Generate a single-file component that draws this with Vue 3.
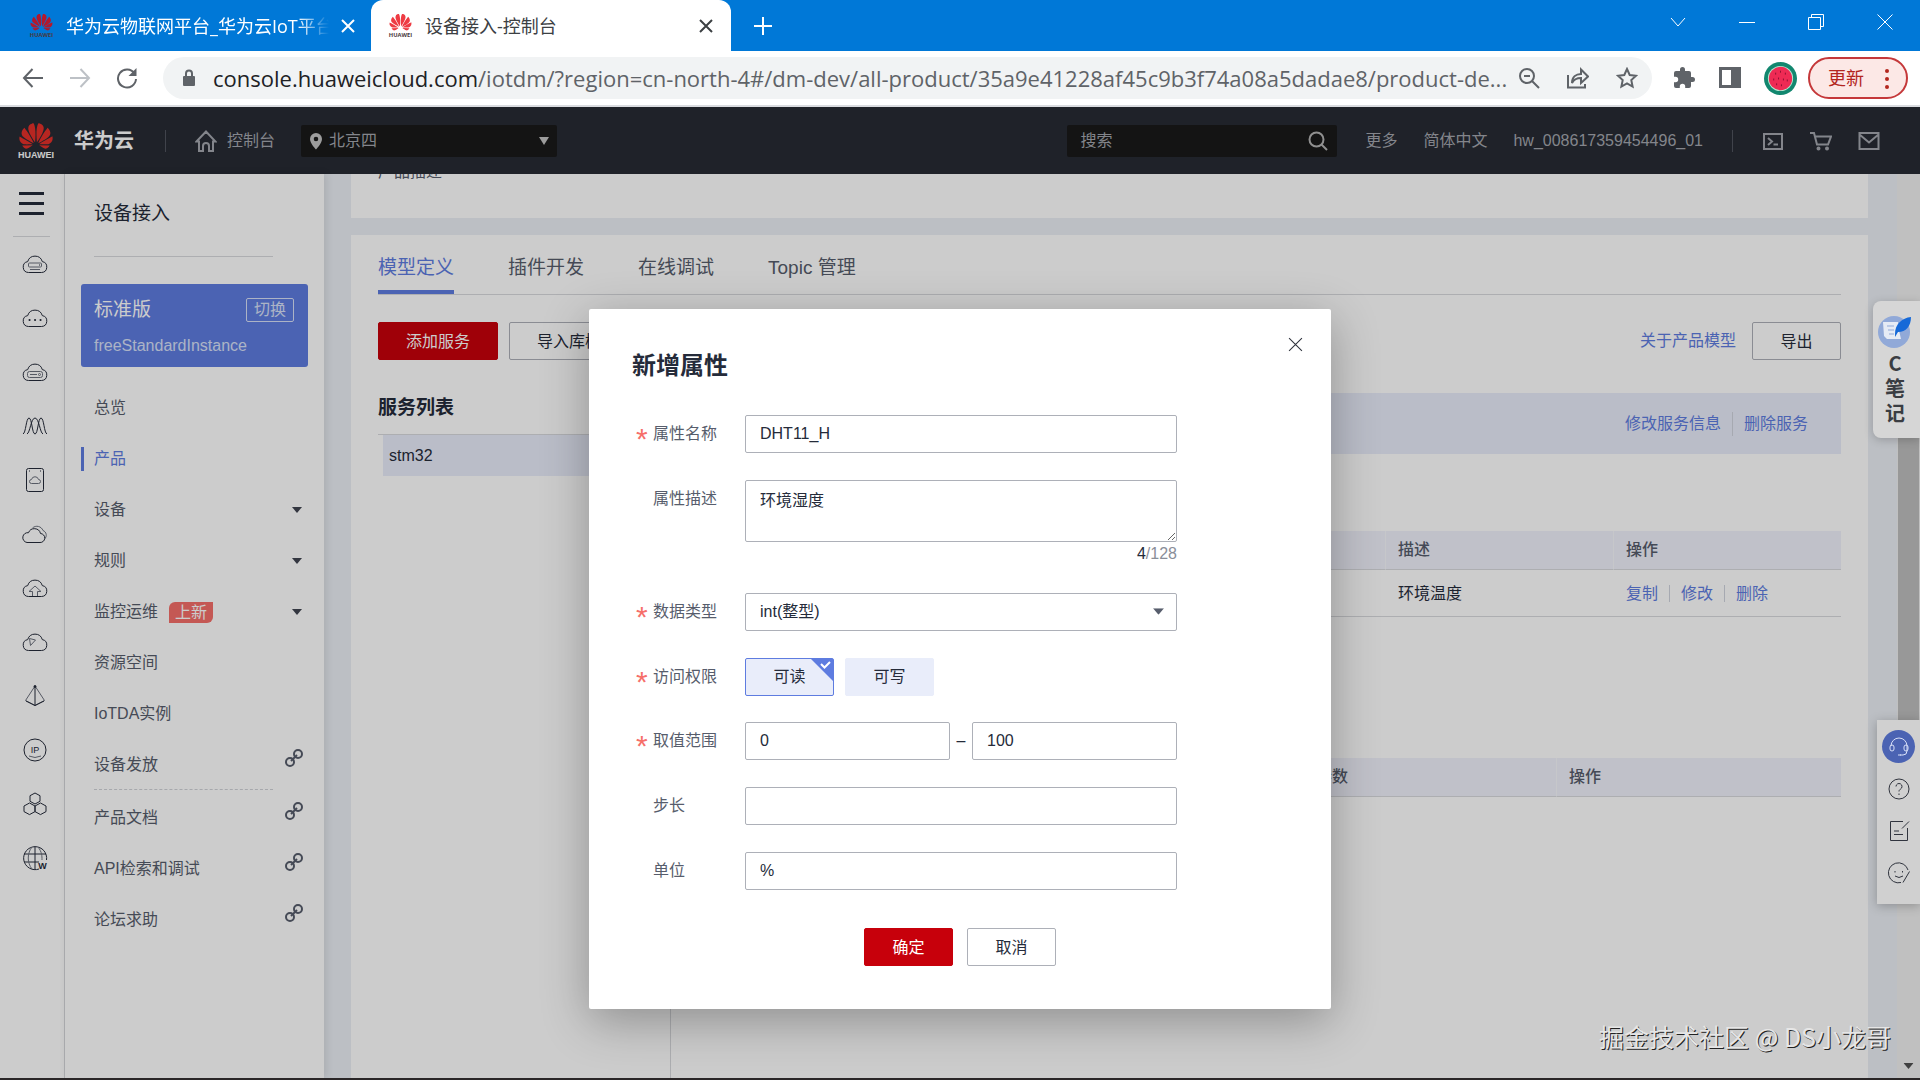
<template>
  <div class="browser">
    <!-- Shared icon symbols -->
    <svg class="sprite" aria-hidden="true">
      <symbol id="petals" viewBox="0 2 24 20">
        <path d="M3.67 6.14S1.82 7.91 1.72 9.78v.35c.08 1.51 1.22 2.4 1.22 2.4 1.83 1.79 6.26 4.04 7.3 4.55 0 0 .06.03.1-.01l.02-.04v-.04C7.52 10.8 3.67 6.14 3.67 6.14zM9.65 18.6c-.02-.08-.1-.08-.1-.08l-7.38.26c.8 1.43 2.15 2.53 3.56 2.2.96-.25 3.16-1.78 3.88-2.3.06-.05.04-.08.04-.08zm.08-.78C6.49 15.63.21 12.28.21 12.28c-.15.46-.2.9-.21 1.3v.07c0 1.07.4 1.82.4 1.82.8 1.69 2.34 2.2 2.34 2.2.7.3 1.4.31 1.4.31.12.02 4.4 0 5.54 0 .05 0 .08-.05.08-.05v-.06c0-.03-.03-.05-.03-.05zM9.06 3.19a3.42 3.42 0 0 0-2.57 3.15v.41c.03.6.16 1.05.16 1.05.66 2.9 3.86 7.65 4.55 8.65.05.05.1.03.1.03a.1.1 0 0 0 .06-.1c1.06-10.6-1.11-13.42-1.11-13.42-.32.02-1.19.23-1.19.23zm8.3 2.27s-.49-1.8-2.44-2.28c0 0-.57-.14-1.17-.22 0 0-2.18 2.81-1.12 13.43.01.07.06.08.06.08.07.03.1-.03.1-.03.72-1.03 3.9-5.76 4.55-8.64 0 0 .36-1.4.02-2.34zm-2.92 13.07s-.07 0-.09.05c0 0-.01.07.03.1.7.51 2.85 2 3.88 2.3 0 0 .16.05.43.06h.14c.69-.02 1.9-.37 3-2.26l-7.4-.25zm7.83-8.41c.14-2.06-1.94-3.97-1.94-3.98 0 0-3.85 4.66-6.67 10.8 0 0-.03.08.02.13l.04.01h.06c1.06-.53 5.46-2.77 7.28-4.54 0 0 1.15-.93 1.21-2.42zm1.52 2.14s-6.28 3.37-9.52 5.55c0 0-.05.04-.03.11 0 0 .03.06.07.06 1.16 0 5.56 0 5.67-.02 0 0 .57-.02 1.27-.29 0 0 1.56-.5 2.37-2.27 0 0 .73-1.45.17-3.14z" />
      </symbol>
      <symbol id="cloud" viewBox="0 0 26 26">
        <path d="M6.5 21.5h13a5.5 5.5 0 0 0 .8-10.9A7.6 7.6 0 0 0 5.7 10.6a5.5 5.5 0 0 0 .8 10.9z" />
      </symbol>
      <symbol id="chain" viewBox="0 0 18 18">
        <circle cx="5" cy="13" r="4" />
        <circle cx="13" cy="5" r="4" />
        <path d="M6 12l6-6" />
      </symbol>
      <symbol id="cross" viewBox="0 0 14 14">
        <path d="M1 1l12 12M13 1L1 13" />
      </symbol>
      <symbol id="caret" viewBox="0 0 10 6">
        <path d="M0 0h10L5 6z" />
      </symbol>
    </svg>

    <!-- Browser tabs -->
    <div class="tab-strip">
      <div class="tab tab-idle">
        <svg class="favicon dark" viewBox="0 0 26 26">
          <use href="#petals" x="1" y="0" width="24" height="19" />
          <text x="13" y="25" text-anchor="middle">HUAWEI</text>
        </svg>
        <span class="tab-title faded">华为云物联网平台_华为云IoT平台</span>
        <button class="tab-close" aria-label="关闭"><svg class="line" viewBox="0 0 14 14"><use href="#cross" /></svg></button>
      </div>
      <div class="tab tab-active">
        <svg class="favicon" viewBox="0 0 26 26">
          <use href="#petals" x="1" y="0" width="24" height="19" />
          <text x="13" y="25" text-anchor="middle">HUAWEI</text>
        </svg>
        <span class="tab-title">设备接入-控制台</span>
        <button class="tab-close" aria-label="关闭"><svg class="line" viewBox="0 0 14 14"><use href="#cross" /></svg></button>
      </div>
      <button class="new-tab" aria-label="新标签页">
        <svg class="line" viewBox="0 0 18 18"><path d="M9 0v18M0 9h18" /></svg>
      </button>
      <div class="window-controls">
        <button aria-label="搜索标签页"><svg viewBox="0 0 16 16"><path d="M1 4l7 8 7-8" /></svg></button>
        <button aria-label="最小化"><svg viewBox="0 0 16 16"><path d="M0 8.5h16" /></svg></button>
        <button aria-label="还原"><svg viewBox="0 0 16 16"><path d="M.5 3.5h12v12H.5zM3.5 3.5v-3h12v12h-3" /></svg></button>
        <button aria-label="关闭窗口"><svg viewBox="0 0 16 16"><path d="M.5.5l15 15M15.5.5l-15 15" /></svg></button>
      </div>
    </div>

    <!-- Address bar -->
    <div class="toolbar">
      <button class="nav-button" aria-label="后退"><svg viewBox="0 0 22 22"><path d="M21 11H2M10.5 2L2 11l8.5 9" /></svg></button>
      <button class="nav-button disabled" aria-label="前进"><svg viewBox="0 0 22 22"><path d="M1 11h19M11.5 2l8.5 9-8.5 9" /></svg></button>
      <button class="nav-button" aria-label="重新加载">
        <svg viewBox="0 0 22 22"><path d="M18.5 6.5A9 9 0 1 0 20 12" /><path class="solid" d="M20.5 1v8h-8z" /></svg>
      </button>
      <div class="omnibox">
        <svg class="lock" viewBox="0 0 14 18">
          <rect x="1" y="7" width="12" height="10" rx="1" />
          <path d="M4 8V4.5a3 3 0 0 1 6 0V8" />
        </svg>
        <span class="url">console.huaweicloud.com<span class="url-path">/iotdm/?region=cn-north-4#/dm-dev/all-product/35a9e41228af45c9b3f74a08a5dadae8/product-de...</span></span>
        <button aria-label="缩放"><svg viewBox="0 0 22 22"><circle cx="9" cy="9" r="7" /><path d="M14 14l7 7M6 9h6" /></svg></button>
        <button aria-label="分享"><svg viewBox="0 0 22 22"><path d="M1 8v12.500h17V17M5 16c0-6 4-9 9-9V2.500l7 7-7 6.500v-5c-4 0-7 1-9 5z" /></svg></button>
        <button aria-label="收藏"><svg viewBox="0 0 22 22"><path d="M11 2l2.700 6 6.300.7-4.700 4.400 1.300 6.400L11 16.300l-5.600 3.200 1.300-6.400L2 8.700 8.300 8z" /></svg></button>
      </div>
      <button class="tool-button" aria-label="扩展程序">
        <svg viewBox="0 0 24 24"><path class="solid" d="M20.500 11H19V7a2 2 0 0 0-2-2h-4V3.500a2.500 2.500 0 0 0-5 0V5H4a2 2 0 0 0-2 2v3.800h1.500a2.700 2.700 0 0 1 0 5.400H2V20a2 2 0 0 0 2 2h3.800v-1.500a2.700 2.700 0 0 1 5.400 0V22H17a2 2 0 0 0 2-2v-4h1.500a2.500 2.500 0 0 0 0-5z" /></svg>
      </button>
      <button class="tool-button" aria-label="侧边栏">
        <svg viewBox="0 0 24 24"><path class="solid" fill-rule="evenodd" d="M1 1h22v21H1zM4 4v15h9V4z" /></svg>
      </button>
      <svg class="avatar" viewBox="0 0 34 34">
        <circle cx="17" cy="17" r="17" fill="#12876f" />
        <circle cx="17" cy="17" r="13" fill="#b5e8d0" />
        <circle cx="17" cy="17" r="12" fill="#ee2a54" />
        <path d="M12 11v2M17 9v2M22 11v2M10 17v2M15 16v2M20 17v2M24 18v2M13 22v2M18 23v2" stroke="#8c1233" stroke-width="1" />
      </svg>
      <button class="update-button">
        更新
        <svg viewBox="0 0 6 22"><circle cx="3" cy="3" r="2" /><circle cx="3" cy="11" r="2" /><circle cx="3" cy="19" r="2" /></svg>
      </button>
    </div>

    <div class="page">
      <!-- Console header -->
      <header class="top-nav">
        <a class="brand" href="#">
          <span class="brand-mark">
            <svg viewBox="0 0 24 20"><use href="#petals" width="24" height="20" /></svg>
            <span>HUAWEI</span>
          </span>
          <strong>华为云</strong>
        </a>
        <span class="nav-divider"></span>
        <a class="console-link" href="#">
          <svg viewBox="0 0 22 22"><path d="M1.500 11.500L11 1.500l9.500 10H18V21h-4v-5a3 3 0 0 0-6 0v5H4v-9.500z" /></svg>
          控制台
        </a>
        <div class="region">
          <svg class="pin" viewBox="0 0 14 18"><path fill-rule="evenodd" d="M7 1a6 6 0 0 0-6 6c0 4.500 6 10.500 6 10.500S13 11.500 13 7a6 6 0 0 0-6-6zm0 3.700a2.300 2.300 0 1 1 0 4.600 2.300 2.300 0 0 1 0-4.600z" /></svg>
          <select aria-label="区域"><option>北京四</option></select>
          <svg class="region-caret" viewBox="0 0 10 8"><path d="M0 0h10L5 8z" /></svg>
        </div>
        <div class="search">
          <input type="text" placeholder="搜索" aria-label="搜索">
          <svg viewBox="0 0 20 20"><circle cx="8.500" cy="8.500" r="7" /><path d="M13.500 13.500L19 19" /></svg>
        </div>
        <a href="#">更多</a>
        <a href="#">简体中文</a>
        <a href="#">hw_008617359454496_01</a>
        <span class="nav-divider"></span>
        <a class="nav-icon" href="#" aria-label="命令行">
          <svg viewBox="0 0 22 22"><path d="M2 4h18v15H2zM6 8l4 3.500L6 15M11.500 14.500H16" /></svg>
        </a>
        <a class="nav-icon" href="#" aria-label="购物车">
          <svg viewBox="0 0 22 22"><path d="M0 3h4l3 11.500h11L21 6.500H5.500" /><circle cx="8.500" cy="18.500" r="1" /><circle cx="17" cy="18.500" r="1" /></svg>
        </a>
        <a class="nav-icon" href="#" aria-label="消息">
          <svg viewBox="0 0 22 22"><path d="M1.500 3h19v16h-19zM1.500 4.500l9.500 8 9.500-8" /></svg>
        </a>
      </header>

      <div class="workspace">
        <!-- Icon rail -->
        <nav class="rail" aria-label="服务">
          <button class="hamburger" aria-label="菜单"><span></span><span></span><span></span></button>
          <ul>
            <li v-for="name in railIcons" :key="name">
              <svg viewBox="0 0 26 26">
                <use v-if="name.startsWith('cloud')" href="#cloud" />
                <template v-if="name === 'cloud-server'"><rect class="thin" x="6.500" y="12" width="13" height="4" rx="1" /><path class="thin" d="M8 18.500h10" /><path d="M17 14h1" /></template>
                <path v-else-if="name === 'cloud-dots'" class="dots" d="M7.500 15h.1M13 15h.1M18.500 15h.1" />
                <template v-else-if="name === 'cloud-disk'"><rect class="thin" x="5.500" y="12.500" width="15" height="6" rx="2" /><path class="thin" d="M8 15.500h7" /><circle class="thin" cx="17.500" cy="15.500" r="1" /></template>
                <path v-else-if="name === 'wave'" d="M1 21C4 20 4 5 7 5s3 16 6 16 3-16 6-16 3 15 6 16M5 21C8 20 9 5 13 5s5 15 8 16" />
                <template v-else-if="name === 'phone'"><rect x="4.500" y="1.500" width="17" height="23" rx="2" /><path class="thin" d="M9.500 16.500h7a2 2 0 0 0 0-4 3.600 3.600 0 0 0-7 0 2 2 0 0 0 0 4z" /><path d="M7 4h1M18 4h1" /></template>
                <template v-else-if="name === 'double'"><path d="M5 21.500h13a4.500 4.500 0 0 0 .5-9 6.300 6.300 0 0 0-12-.8A4.900 4.900 0 0 0 5 21.500z" /><path class="thin" d="M10.500 7a6.500 6.500 0 0 1 10.500 2.500 5 5 0 0 1 1.500 8.500" /></template>
                <path v-else-if="name === 'cloud-up'" class="thin" d="M10.500 21v-4.500H7L13 11l6 5.500h-3.500V21" />
                <path v-else-if="name === 'cloud-mark'" class="thin" d="M7.500 9.500l6 1.500-5 5.500z" />
                <template v-else-if="name === 'prism'"><path class="thin" d="M13 3L3.500 17.500 13 22.500l9.500-5z" /><path d="M13 3v19.500M4 18l9 4.500 9-4.500" /><circle class="filled" cx="13" cy="3.500" r="1" /></template>
                <template v-else-if="name === 'ip'"><circle cx="13" cy="13" r="11" /><text x="13" y="16" text-anchor="middle">IP</text><path class="thin" d="M7 19q6 3 12 0" /></template>
                <path v-else-if="name === 'hexes'" d="M13 2l5 2.700v5.600l-5 2.700-5-2.700V4.700zM7.500 12l5.500 3v5.600l-5.500 3-5.500-3V15zM18.500 12l5.500 3v5.600l-5.500 3-5.500-3V15z" />
                <template v-else-if="name === 'globe'"><path d="M17 24A11.500 11.500 0 1 1 24.500 15M13 1.500v23M2 9h22M2 17h15" /><path class="thin" d="M10 2C5 8 5 18 10 24M16 2c4 5 4 9 4 13" /><text x="20.500" y="24" text-anchor="middle" class="bold">W</text></template>
              </svg>
            </li>
          </ul>
        </nav>

        <!-- Product menu -->
        <aside class="sidebar">
          <h2>设备接入</h2>
          <div class="instance">
            <div class="instance-row">
              <strong>标准版</strong>
              <button>切换</button>
            </div>
            <span>freeStandardInstance</span>
          </div>
          <ul class="menu">
            <li v-for="item in menu" :key="item.text" :class="{ current: item.current, divided: item.divided }">
              <a href="#">{{ item.text }}<em v-if="item.badge">{{ item.badge }}</em></a>
              <svg v-if="item.icon === 'caret'" class="menu-caret" viewBox="0 0 10 6"><use href="#caret" /></svg>
              <svg v-if="item.icon === 'chain'" class="menu-chain" viewBox="0 0 18 18"><use href="#chain" /></svg>
            </li>
          </ul>
        </aside>

        <!-- Product detail -->
        <main class="content">
          <section class="card summary">产品描述</section>
          <section class="card detail">
            <nav class="detail-tabs">
              <a v-for="(tab, i) in detailTabs" :key="tab" href="#" :class="{ active: i === 0 }">{{ tab }}</a>
            </nav>
            <div class="actions">
              <button class="btn primary wide">添加服务</button>
              <button class="btn wide">导入库模型</button>
              <a class="model-link" href="#">关于产品模型</a>
              <button class="btn">导出</button>
            </div>
            <div class="service-area">
              <div class="services">
                <h3>服务列表</h3>
                <ul><li>stm32</li></ul>
              </div>
              <div class="service-detail">
                <div class="service-bar">
                  <a href="#">修改服务信息</a>
                  <a href="#">删除服务</a>
                </div>
                <table class="properties">
                  <thead>
                    <tr><th></th><th></th><th></th><th>描述</th><th>操作</th></tr>
                  </thead>
                  <tbody>
                    <tr>
                      <td></td><td></td><td></td>
                      <td>环境温度</td>
                      <td class="row-actions"><a href="#">复制</a><a href="#">修改</a><a href="#">删除</a></td>
                    </tr>
                  </tbody>
                </table>
                <table class="commands">
                  <thead>
                    <tr><th></th><th></th><th>下发参数</th><th>操作</th></tr>
                  </thead>
                </table>
              </div>
            </div>
          </section>
        </main>

        <div class="scroll-track">
          <div class="scroll-thumb"></div>
          <svg viewBox="0 0 10 6"><use href="#caret" /></svg>
        </div>
      </div>

      <!-- Modal -->
      <div class="overlay">
        <form class="dialog" role="dialog" aria-labelledby="dialog-title" @submit.prevent>
          <button type="button" class="dialog-close" aria-label="关闭"><svg viewBox="0 0 14 14"><use href="#cross" /></svg></button>
          <h1 id="dialog-title">新增属性</h1>
          <div class="field">
            <label class="required" for="name">属性名称</label>
            <input id="name" v-model="form.name" type="text">
          </div>
          <div class="field">
            <label for="description">属性描述</label>
            <div class="control">
              <textarea id="description" v-model="form.description" maxlength="128"></textarea>
              <p class="counter"><b>{{ form.description.length }}</b>/128</p>
            </div>
          </div>
          <div class="field">
            <label class="required" for="type">数据类型</label>
            <div class="control select-box">
              <select id="type" v-model="form.type"><option>int(整型)</option></select>
              <svg viewBox="0 0 10 6"><use href="#caret" /></svg>
            </div>
          </div>
          <fieldset class="field">
            <legend class="required">访问权限</legend>
            <label class="tile">
              <input v-model="form.readable" type="checkbox">
              可读
              <svg viewBox="0 0 22 22"><path class="corner" d="M0 0h22v22z" /><path class="tick" d="M10 5l3.500 3.500L19 3" /></svg>
            </label>
            <label class="tile">
              <input v-model="form.writable" type="checkbox">
              可写
              <svg viewBox="0 0 22 22"><path class="corner" d="M0 0h22v22z" /><path class="tick" d="M10 5l3.500 3.500L19 3" /></svg>
            </label>
          </fieldset>
          <div class="field">
            <label class="required" for="min">取值范围</label>
            <div class="control range">
              <input id="min" v-model="form.min" type="text">
              <span>–</span>
              <input v-model="form.max" type="text" aria-label="最大值">
            </div>
          </div>
          <div class="field">
            <label for="step">步长</label>
            <input id="step" v-model="form.step" type="text">
          </div>
          <div class="field">
            <label for="unit">单位</label>
            <input id="unit" v-model="form.unit" type="text">
          </div>
          <div class="dialog-actions">
            <button type="submit" class="btn primary">确定</button>
            <button type="button" class="btn">取消</button>
          </div>
        </form>
      </div>

      <!-- Floating widgets -->
      <button class="note-widget">
        <svg viewBox="0 0 34 34">
          <circle cx="16" cy="18" r="16" fill="#91a9d8" />
          <path d="M5 8h15v4l3 13H9L6 22z" fill="#e6ebf5" />
          <path d="M9 12h7M10 16h6M11 20h5" stroke="#91a9d8" stroke-width="1" />
          <path d="M17 20C17 10 24 4 33 3c0 9-5 15-13 15l-3 5z" fill="#1669d8" />
        </svg>
        <span>C笔记</span>
      </button>
      <div class="help-widget">
        <button class="round" aria-label="客服"><svg viewBox="0 0 22 22"><path d="M3 10a8 8 0 0 1 16 0v5a4 4 0 0 1-4 4h-3" /><rect x="2" y="9" width="4" height="6" rx="2" /><rect x="16" y="9" width="4" height="6" rx="2" /><path d="M10 19h3" /></svg></button>
        <button aria-label="帮助"><svg viewBox="0 0 22 22"><circle cx="11" cy="11" r="10" /><path d="M8 8.500a3 3 0 1 1 4.500 2.600c-1 .7-1.500 1.200-1.500 2.400M11 15.500V17" /></svg></button>
        <button aria-label="反馈"><svg viewBox="0 0 22 22"><path d="M15 1.500H2.500v19h17V8M21 1.500l-7 7M6 11h5M6 14.500h9" /></svg></button>
        <button aria-label="评价"><svg viewBox="0 0 22 22"><path d="M20 8A10 10 0 1 0 13 20.500M21.500 9.500L15 20.500M7 14q4 3 8 0M7 9v1.500M14.500 9v1.500" /></svg></button>
      </div>
      <p class="watermark">掘金技术社区 @ DS小龙哥</p>
    </div>
  </div>
</template>

<script setup>
import { reactive } from 'vue'

const railIcons = [
  'cloud-server', 'cloud-dots', 'cloud-disk', 'wave', 'phone', 'double',
  'cloud-up', 'cloud-mark', 'prism', 'ip', 'hexes', 'globe'
]

const menu = [
  { text: '总览' },
  { text: '产品', current: true },
  { text: '设备', icon: 'caret' },
  { text: '规则', icon: 'caret' },
  { text: '监控运维', badge: '上新', icon: 'caret' },
  { text: '资源空间' },
  { text: 'IoTDA实例' },
  { text: '设备发放', icon: 'chain', divided: true },
  { text: '产品文档', icon: 'chain' },
  { text: 'API检索和调试', icon: 'chain' },
  { text: '论坛求助', icon: 'chain' }
]

const detailTabs = ['模型定义', '插件开发', '在线调试', 'Topic 管理']

const form = reactive({
  name: 'DHT11_H',
  description: '环境湿度',
  type: 'int(整型)',
  readable: true,
  writable: false,
  min: '0',
  max: '100',
  step: '',
  unit: '%'
})
</script>

<style>
body {
  margin: 0;
  overflow: hidden;
}
</style>

<style scoped>
* {
  box-sizing: border-box;
}

.browser {
  display: flex;
  flex-direction: column;
  height: 100vh;
  font-family: "Liberation Sans", "Noto Sans CJK SC", sans-serif;
  font-size: 16px;
  line-height: 24px;
  color: #252b3a;
  background: #fff;
}

button, input, select, textarea {
  font: inherit;
  color: inherit;
}

button {
  padding: 0;
  border: 0;
  background: none;
}

a {
  color: inherit;
  text-decoration: none;
}

ul, h1, h2, h3, p {
  margin: 0;
  padding: 0;
  list-style: none;
}

svg {
  display: block;
  flex: none;
}

.sprite {
  position: absolute;
  width: 0;
  height: 0;
}

/* Browser frame */
.tab-strip {
  display: flex;
  flex: none;
  height: 51px;
  color: #fff;
  background: #0078d7;
}

.tab {
  display: flex;
  align-items: center;
  gap: 12px;
  font-family: "Open Sans", "Noto Sans CJK SC", sans-serif;
  font-size: 18px;
}

.tab-idle {
  width: 371px;
  padding: 0 16px 0 29px;
}

.tab-active {
  width: 360px;
  padding: 0 18px 0 17px;
  border-radius: 12px 12px 0 0;
  color: #3c4043;
  background: #fff;
}

.tab-title {
  flex: 1;
  overflow: hidden;
  white-space: nowrap;
}

.faded {
  mask-image: linear-gradient(90deg, #000 88%, transparent);
}

.favicon {
  width: 25px;
  height: 25px;
  fill: #ee3b43;
}

.favicon.dark {
  fill: #b3182c;
}

.favicon text {
  font-size: 6px;
  font-weight: bold;
  fill: #4a3a40;
}

.tab-close svg {
  width: 14px;
  height: 14px;
}

.line {
  fill: none;
  stroke: currentColor;
  stroke-width: 2;
}

.new-tab {
  padding: 0 23px;
}

.new-tab svg {
  width: 18px;
  height: 18px;
}

.window-controls {
  display: flex;
  gap: 53px;
  height: 43px;
  margin-left: auto;
  padding-right: 27px;
}

.window-controls svg {
  width: 16px;
  height: 16px;
  fill: none;
  stroke: #fff;
  stroke-width: 1;
}

.toolbar {
  display: flex;
  flex: none;
  align-items: center;
  height: 56px;
  padding: 0 12px 0 22px;
  border-bottom: 2px solid #dadce0;
  color: #5f6368;
}

.nav-button {
  width: 47px;
}

.nav-button svg {
  width: 22px;
  height: 22px;
}

.nav-button svg, .omnibox button svg {
  fill: none;
  stroke: currentColor;
  stroke-width: 2;
}

.nav-button.disabled {
  color: #bdc1c6;
}

svg .solid {
  fill: #5f6368;
  stroke: none;
}

.omnibox {
  display: flex;
  flex: 1;
  align-items: center;
  min-width: 0;
  height: 42px;
  margin-right: 20px;
  padding: 0 14px 0 19px;
  border-radius: 21px;
  background: #f1f3f4;
}

.lock {
  width: 14px;
  height: 18px;
  margin-right: 17px;
  fill: #5f6368;
}

.lock path {
  fill: none;
  stroke: #5f6368;
  stroke-width: 2;
}

.url {
  flex: 1;
  overflow: hidden;
  font-family: "Open Sans", sans-serif;
  font-size: 22px;
  line-height: 32px;
  color: #202124;
  white-space: nowrap;
}

.url-path {
  color: #5f6368;
}

.omnibox button svg {
  width: 22px;
  height: 22px;
}

.omnibox button + button {
  margin-left: 27px;
}

.tool-button {
  margin-right: 22px;
}

.tool-button svg {
  width: 24px;
  height: 24px;
}

.avatar {
  width: 33px;
  height: 33px;
  margin-right: 11px;
}

.update-button {
  display: flex;
  align-items: center;
  justify-content: space-between;
  width: 100px;
  height: 42px;
  padding: 2px 16px 0 18px;
  border: 2px solid #c5383a;
  border-radius: 21px;
  font-size: 18px;
  color: #b3261e;
  background: #fce8e6;
}

.update-button svg {
  width: 6px;
  height: 22px;
  fill: currentColor;
}

/* Console header */
.page {
  position: relative;
  display: flex;
  flex: 1;
  flex-direction: column;
  min-height: 0;
  overflow: hidden;
  border-bottom: 2px solid #2a2627;
}

.top-nav {
  display: flex;
  flex: none;
  align-items: center;
  gap: 26px;
  height: 67px;
  padding: 0 40px 0 18px;
  color: #a4a7ae;
  background: #272b34;
}

.brand {
  display: flex;
  align-items: center;
  gap: 20px;
  margin-right: 2px;
}

.brand strong {
  font-size: 20px;
  color: #fff;
}

.brand-mark {
  display: flex;
  flex-direction: column;
  align-items: center;
  width: 36px;
  font-size: 9px;
  font-weight: bold;
  line-height: 10px;
  color: #fff;
}

.brand-mark svg {
  width: 34px;
  height: 28px;
  fill: #e5302a;
}

.nav-divider {
  width: 1px;
  height: 22px;
  margin: 0 3px;
  background: #50545e;
}

.console-link {
  display: flex;
  align-items: center;
  gap: 10px;
}

.console-link svg, .nav-icon svg {
  width: 22px;
  height: 22px;
  fill: none;
  stroke: currentColor;
  stroke-width: 2;
}

.region, .search {
  position: relative;
  display: flex;
  align-items: center;
  height: 32px;
  border-radius: 2px;
  background: #191919;
}

.region {
  width: 256px;
}

.region select {
  width: 100%;
  height: 32px;
  padding: 1px 28px 0;
  border: 0;
  appearance: none;
  background: none;
}

.pin {
  position: absolute;
  left: 8px;
  width: 14px;
  height: 18px;
  fill: #c4c4c4;
}

.region-caret {
  position: absolute;
  right: 8px;
  width: 10px;
  height: 8px;
  fill: #c4c4c4;
}

.search {
  width: 270px;
  margin-right: 2px;
  margin-left: auto;
  padding: 0 9px 0 13px;
}

.search input {
  flex: 1;
  min-width: 0;
  padding: 0;
  border: 0;
  background: none;
}

.search input::placeholder {
  color: #a4a7ae;
}

.search svg {
  width: 20px;
  height: 20px;
  fill: none;
  stroke: #b4b4b4;
  stroke-width: 2;
}

/* Left navigation */
.workspace {
  display: flex;
  flex: 1;
  min-height: 0;
  background: #ebeff5;
}

.rail {
  flex: none;
  width: 65px;
  border-right: 1px solid #d9dade;
  background: #fff;
}

.hamburger {
  display: flex;
  flex-direction: column;
  gap: 7px;
  width: 37px;
  margin-left: 13px;
  padding: 18px 6px 21px;
  border-bottom: 1px solid #d9dade;
}

.hamburger span {
  height: 3px;
  background: #252b3a;
}

.rail ul {
  padding-left: 6px;
}

.rail li {
  display: flex;
  align-items: center;
  justify-content: center;
  height: 54px;
}

.rail svg {
  width: 26px;
  height: 26px;
  fill: none;
  stroke: #252b3a;
  stroke-width: 1;
}

.rail text {
  font-size: 9px;
  fill: #252b3a;
  stroke: none;
}

.rail .bold {
  font-weight: bold;
}

.rail .filled {
  fill: #252b3a;
}

.rail .thin {
  stroke: #6c717d;
}

.rail .dots {
  stroke-width: 2;
  stroke-linecap: round;
}

.sidebar {
  position: relative;
  flex: none;
  width: 259px;
  padding: 0 16px;
  background: #fff;
  box-shadow: 2px 0 8px rgba(0, 0, 0, 0.1);
}

.sidebar h2 {
  margin: 0 35px 27px 13px;
  padding: 26px 0 28px;
  border-bottom: 1px solid #d9dade;
  font-size: 19px;
  font-weight: normal;
  line-height: 28px;
}

.instance {
  height: 83px;
  margin-bottom: 15px;
  padding: 12px 14px 12px 13px;
  border-radius: 3px;
  line-height: 22px;
  color: #d8e0f8;
  background: #5e7ce0;
}

.instance-row {
  display: flex;
  align-items: center;
  justify-content: space-between;
  margin-bottom: 11px;
}

.instance strong {
  font-size: 19px;
  font-weight: normal;
  line-height: 28px;
  color: #fff;
}

.instance button {
  width: 48px;
  height: 24px;
  border: 1px solid #d8e0f8;
  border-radius: 2px;
}

.menu li {
  display: flex;
  align-items: center;
  justify-content: space-between;
  height: 51px;
  padding: 1px 5px 0 13px;
  color: #575d6c;
}

.menu a {
  display: flex;
  align-items: center;
  gap: 11px;
}

.menu em {
  padding: 0 6px;
  border-radius: 6px 0;
  font-style: normal;
  line-height: 21px;
  color: #fff;
  background: #f66f6a;
}

.menu .current {
  color: #5e7ce0;
  background: linear-gradient(#5e7ce0, #5e7ce0) 0 50% / 3px 24px no-repeat;
}

.menu .divided {
  position: relative;
  margin-bottom: 2px;
}

.menu .divided::after {
  position: absolute;
  right: 35px;
  bottom: 0;
  left: 13px;
  border-bottom: 1px dashed #d0d2d8;
  content: "";
}

.menu-caret {
  width: 10px;
  height: 6px;
  margin-right: 1px;
  fill: #404450;
}

.menu-chain {
  width: 18px;
  height: 18px;
  margin-bottom: 14px;
  fill: none;
  stroke: #575d6c;
  stroke-width: 2;
}

/* Product detail */
.content {
  display: flex;
  flex: 1;
  flex-direction: column;
  gap: 17px;
  min-width: 0;
  padding: 0 29px 0 27px;
  overflow: hidden;
}

.card {
  padding: 0 27px;
  background: #fff;
}

.summary {
  flex: none;
  height: 58px;
  margin-top: -14px;
  color: #575d6c;
}

.detail {
  display: flex;
  flex: 1;
  flex-direction: column;
}

.detail-tabs {
  display: flex;
  gap: 54px;
  height: 60px;
  border-bottom: 1px solid #d9dade;
  font-size: 19px;
  line-height: 28px;
  color: #575d6c;
}

.detail-tabs a {
  padding-top: 19px;
}

.detail-tabs .active {
  border-bottom: 4px solid #5e7ce0;
  color: #5e7ce0;
}

.actions {
  display: flex;
  align-items: center;
  gap: 11px;
  padding: 27px 0;
}

.btn {
  min-width: 89px;
  height: 38px;
  padding-top: 2px;
  border: 1px solid #adb0b8;
  border-radius: 2px;
  background: #fff;
}

.wide {
  padding: 2px 27px 0;
}

.primary {
  border-color: #c7000b;
  color: #fff;
  background: #c7000b;
}

.model-link {
  margin-right: 5px;
  margin-left: auto;
  color: #5e7ce0;
}

.service-area {
  display: flex;
  flex: 1;
}

.services {
  width: 293px;
  border-right: 1px solid #d9dade;
}

.services h3 {
  padding: 7px 0 12px;
  border-bottom: 1px solid #d9dade;
  font-size: 19px;
  line-height: 28px;
}

.services li {
  margin-left: 5px;
  padding: 9px 6px 8px;
  background: #e9edfa;
}

.service-detail {
  flex: 1;
  padding: 6px 0 0 30px;
}

.service-bar {
  display: flex;
  align-items: center;
  justify-content: flex-end;
  height: 61px;
  margin-bottom: 77px;
  padding-right: 33px;
  color: #5e7ce0;
  background: #e9edfa;
}

.service-bar a + a, .row-actions a + a {
  margin-left: 11px;
  padding-left: 11px;
  border-left: 1px solid #d0d4de;
}

table {
  width: 100%;
  border-collapse: separate;
  border-spacing: 0;
  table-layout: fixed;
}

th, td {
  padding: 0 12px;
  border-bottom: 1px solid #d9dade;
  text-align: left;
}

th {
  height: 39px;
  font-weight: 500;
  color: #575d6c;
  background: #f0f2fc;
}

th + th {
  border-left: 1px solid #f8f9fd;
}

td {
  height: 47px;
  padding: 2px 13px 0;
}

.properties {
  margin-bottom: 141px;
}

.row-actions {
  color: #5e7ce0;
}

.scroll-track {
  display: flex;
  flex: none;
  flex-direction: column;
  align-items: center;
  justify-content: space-between;
  width: 23px;
  padding: 256px 0 9px;
  background: #f1f1f1;
}

.scroll-thumb {
  width: 21px;
  height: 290px;
  background: #bebebe;
}

.scroll-track svg {
  width: 11px;
  height: 6px;
  fill: #505050;
}

/* Dialog */
.overlay {
  position: absolute;
  inset: 0;
  display: flex;
  align-items: flex-start;
  justify-content: center;
  padding-top: 202px;
  background: rgba(0, 0, 0, 0.2);
}

.dialog {
  position: relative;
  width: 742px;
  padding: 39px 43px 43px;
  border-radius: 2px;
  background: #fff;
  box-shadow: 0 12px 48px rgba(0, 0, 0, 0.3);
}

.dialog-close {
  position: absolute;
  top: 28px;
  right: 28px;
}

.dialog-close svg {
  width: 15px;
  height: 15px;
  fill: none;
  stroke: #30343e;
  stroke-width: 1;
}

.dialog h1 {
  margin-bottom: 31px;
  font-size: 24px;
  line-height: 36px;
}

.field {
  display: grid;
  grid-template-columns: 113px 432px;
  margin: 0 0 27px;
  padding: 0;
  border: 0;
}

.field > label, .field > legend {
  position: relative;
  padding: 7px 0 0 21px;
  color: #575d6c;
}

.field .required::before {
  position: absolute;
  top: 12px;
  left: 4px;
  font-size: 30px;
  color: #f66f6a;
  content: "*";
}

.field input[type="text"], .field textarea, .field select {
  width: 100%;
  height: 38px;
  padding: 0 14px;
  border: 1px solid #adb0b8;
  border-radius: 2px;
  outline: none;
  background: #fff;
}

.field textarea {
  display: block;
  height: 62px;
  padding: 8px 14px;
}

.field select {
  appearance: none;
}

.counter {
  text-align: right;
  color: #8a8e99;
}

.counter b {
  font-weight: normal;
  color: #252b3a;
}

.select-box {
  position: relative;
}

.select-box svg {
  position: absolute;
  top: 15px;
  right: 13px;
  width: 11px;
  height: 7px;
  fill: #575d6c;
}

fieldset.field {
  display: flex;
  gap: 11px;
  margin-bottom: 26px;
}

.field > legend {
  float: left;
  width: 102px;
}

.field > .tile {
  position: relative;
  width: 89px;
  height: 38px;
  padding: 0;
  border: 1px solid #e9edfa;
  border-radius: 2px;
  line-height: 36px;
  text-align: center;
  color: #252b3a;
  background: #e9edfa;
}

.tile input {
  position: absolute;
  opacity: 0;
}

.tile svg {
  position: absolute;
  top: 0;
  right: 0;
  display: none;
  width: 22px;
  height: 22px;
}

.tile .corner {
  fill: #5e7ce0;
}

.tile .tick {
  fill: none;
  stroke: #fff;
  stroke-width: 2;
}

.field > .tile:has(:checked) {
  border-color: #5e7ce0;
}

.tile:has(:checked) svg {
  display: block;
}

.range {
  display: grid;
  grid-template-columns: 1fr 22px 1fr;
  align-items: center;
  text-align: center;
}

.dialog-actions {
  display: flex;
  gap: 14px;
  justify-content: center;
  padding-top: 11px;
}

/* Floating widgets */
.note-widget {
  position: absolute;
  top: 194px;
  right: 0;
  display: flex;
  flex-direction: column;
  align-items: center;
  width: 47px;
  height: 137px;
  padding: 13px 3px 0 0;
  border-radius: 8px 0 0 8px;
  font-family: "Noto Sans CJK SC", sans-serif;
  font-size: 20px;
  font-weight: bold;
  line-height: 25px;
  color: #3a3d42;
  background: #d6d6d6;
  box-shadow: 0 2px 10px rgba(0, 0, 0, 0.2);
}

.note-widget svg {
  width: 34px;
  height: 34px;
  margin-bottom: 2px;
}

.note-widget span {
  width: 20px;
}

.help-widget {
  position: absolute;
  right: 0;
  bottom: 174px;
  display: flex;
  flex-direction: column;
  align-items: center;
  width: 43px;
  height: 184px;
  padding-top: 10px;
  color: #30343e;
  background: #d0d0d0;
  box-shadow: 0 2px 10px rgba(0, 0, 0, 0.25);
}

.help-widget svg {
  width: 22px;
  height: 22px;
  fill: none;
  stroke: currentColor;
  stroke-width: 1;
}

.help-widget button + button {
  margin-top: 20px;
}

.help-widget .round + button {
  margin-top: 15px;
}

.help-widget .round {
  display: flex;
  flex: none;
  align-items: center;
  justify-content: center;
  width: 33px;
  height: 33px;
  border-radius: 50%;
  color: #d8e0f8;
  background: #4b63b3;
}

.watermark {
  position: absolute;
  right: 29px;
  bottom: 24px;
  font-family: "Noto Sans CJK SC", sans-serif;
  font-size: 25px;
  line-height: 36px;
  color: #e6e6e6;
  text-shadow: 1px 1px 0 #222;
}
</style>
